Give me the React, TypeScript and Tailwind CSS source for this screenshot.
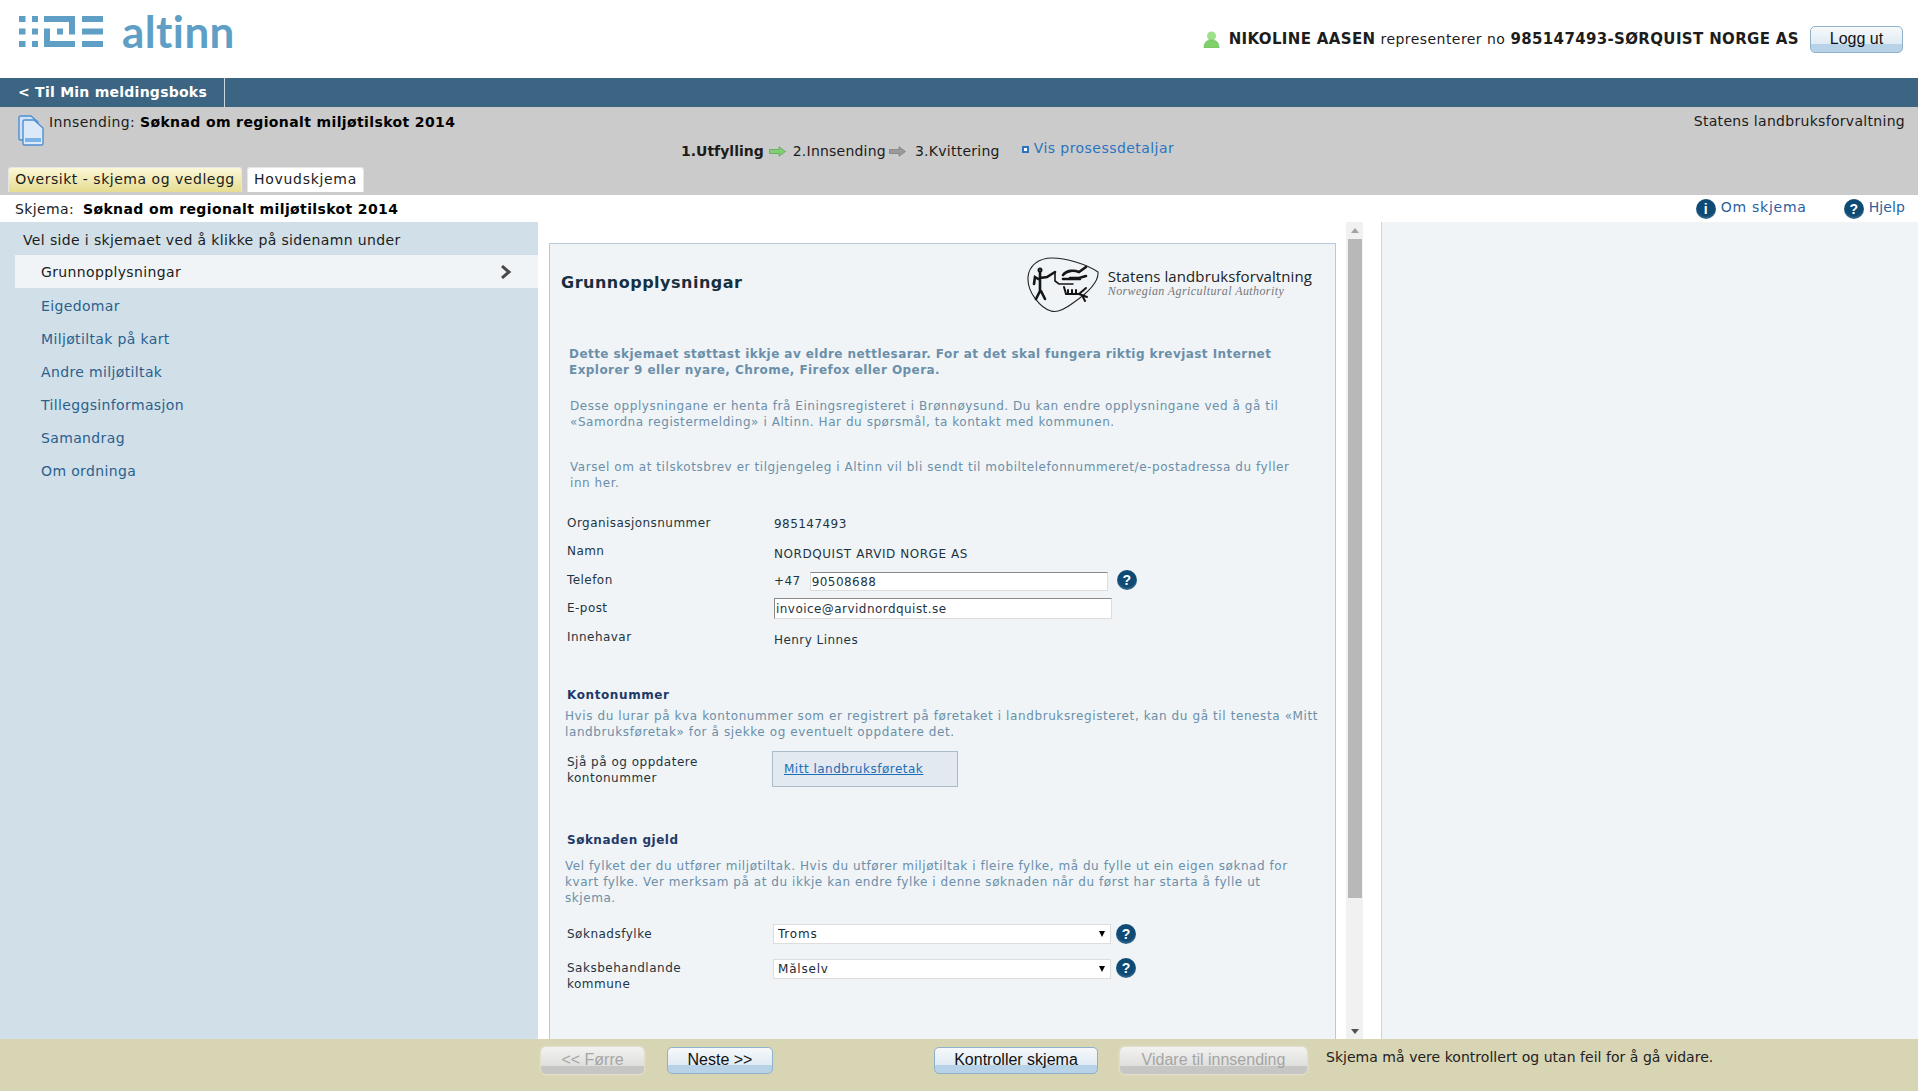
const verdana = "font-['DejaVu_Sans','Verdana',sans-serif]";

const navItems = ['Eigedomar', 'Miljøtiltak på kart', 'Andre miljøtiltak', 'Tilleggsinformasjon', 'Samandrag', 'Om ordninga'];

function AltinnMark() {
  return (
    <svg width="85" height="31" viewBox="0 0 85 31" fill="#5f9fc6">
      {[0, 12.5, 25].map((y) => (
        <g key={y}>
          <rect x="0" y={y} width="6.5" height="6" />
          <rect x="13" y={y} width="6" height="6" />
          <rect x="63" y={y} width="21" height="6" />
        </g>
      ))}
      <path d="M25 0h31v18.5h-6V6H25zM25 12.5h6V25h25v6H25z" />
      <rect x="38" y="12.5" width="6" height="6" />
    </svg>
  );
}

function HelpIcon({ glyph = '?' }: { glyph?: string }) {
  return (
    <span className="flex h-[20px] w-[20px] shrink-0 items-center justify-center rounded-full bg-[radial-gradient(circle_at_50%_40%,#0f4a75_55%,#6d93ad_100%)] font-['Liberation_Sans',sans-serif] text-[14px] font-bold leading-none tracking-normal text-white">
      {glyph}
    </span>
  );
}

function BlueButton({ label, className }: { label: string; className: string }) {
  return (
    <button className={`h-[27px] rounded-[5px] border border-[#8fb1c9] bg-[linear-gradient(#f6f9fb_0%,#dfeaf3_70%,#b8d3e7_70%,#b8d3e7_100%)] pb-[2px] font-['Liberation_Sans',sans-serif] text-[16px] leading-none text-[#111] ${className}`}>
      {label}
    </button>
  );
}

function DisabledButton({ label, className }: { label: string; className: string }) {
  return (
    <button className={`h-[27px] rounded-[5px] bg-[linear-gradient(#f2f2f0_0%,#dededc_72%,#c6c6c4_72%,#c6c6c4_100%)] pb-[2px] font-['Liberation_Sans',sans-serif] text-[16px] leading-none text-[#a5a5a3] shadow-[0_0_3px_#eeeeee] ${className}`}>
      {label}
    </button>
  );
}

function Arrow({ color, edge }: { color: string; edge: string }) {
  return (
    <svg width="17" height="11" viewBox="0 0 17 11" className="shrink-0">
      <path d="M0.5 3.5H10V0.8L16.5 5.5L10 10.2V7.5H0.5Z" fill={color} stroke={edge} strokeWidth="0.8" />
    </svg>
  );
}

function SelectBox({ value }: { value: string }) {
  return (
    <div className="relative h-[20px] w-[338px]">
      <select defaultValue={value} className="h-[20px] w-[338px] appearance-none border border-[#dddddd] bg-white pl-[4px] text-[12px] leading-none tracking-[0.8px] text-[#1a2a36]">
        <option>{value}</option>
      </select>
      <span className="absolute right-[6px] top-[7px] h-0 w-0 border-x-[3px] border-t-[6px] border-x-transparent border-t-black" />
    </div>
  );
}

function LogoAnimal() {
  return (
    <svg width="73" height="56" viewBox="0 0 73 56" fill="none">
      <path d="M1 20C2 9 11 1 25 1C39 1 59 7 71 15C72 25 59 37 46 46C38 52 30 56 24 54C14 51 0 36 1 20Z" stroke="#222" strokeWidth="1.1" />
      <g stroke="#151515" strokeLinecap="round">
        <path d="M13 15L13 35M13 23L8 20L7 27M13 21L20 20L28 15M13 34L9 42M14 34L18 42" strokeWidth="2.6" />
        <circle cx="13" cy="13" r="1.5" strokeWidth="2" />
        <path d="M28 15V24L32 27H46" strokeWidth="1.6" />
        <path d="M36 18C40 13 47 13 52 15L59 10M43 21H52L59 19M36 22H53" strokeWidth="2.6" />
        <path d="M37 30L39 37H52L59 31M41 37V33M45 37V33M49 37V33M52 37L60 40M55 38L58 44" strokeWidth="2" />
      </g>
    </svg>
  );
}

export default function App() {
  return (
    <div className={`flex h-[1091px] w-[1918px] flex-col overflow-hidden bg-white ${verdana} text-[14px] text-[#1c1c1c]`}>
      {/* header */}
      <header className="flex h-[78px] shrink-0 items-start justify-between pl-[19px] pr-[15px]">
        <div className="flex items-start gap-[18px] pt-[16px]">
          <AltinnMark />
          <span className="-mt-[15px] font-['Lato',sans-serif] text-[44px] font-bold leading-[60px] tracking-[0.4px] text-[#5f9fc6]">altinn</span>
        </div>
        <div className="flex items-center gap-[11px] pt-[26px]">
          <svg width="17" height="17" viewBox="0 0 17 17">
            <circle cx="8.5" cy="5" r="4.5" fill="#9fe08c" />
            <path d="M1 17C1 11 4 9 8.5 9C13 9 16 11 16 17Z" fill="#7fd06a" stroke="#69b857" strokeWidth="0.6" />
          </svg>
          <div className="-ml-[2px] text-[15px] tracking-[0.35px]">
            <b>NIKOLINE AASEN</b> <span className="text-[14px] tracking-[0.45px]">representerer no</span> <b>985147493-SØRQUIST NORGE AS</b>
          </div>
          <BlueButton label="Logg ut" className="w-[93px]" />
        </div>
      </header>

      {/* blue bar */}
      <div className="flex h-[29px] shrink-0 bg-[#3b6583]">
        <a className="w-[225px] border-r border-[#c9d6df] pl-[18px] font-bold leading-[29px] tracking-[0.25px] text-white">&lt; Til Min meldingsboks</a>
      </div>

      {/* process area */}
      <div className="flex h-[88px] shrink-0 flex-col bg-[#cbcbcb]">
        <div className="flex h-[60px] justify-between pl-[18px] pr-[13px]">
          <div className="flex items-start gap-[5px] pt-[8px]">
            <svg width="26" height="31" viewBox="0 0 26 31">
              <path d="M1 2.5Q1 1 2.5 1H13L20 7V25H2.5Q1 25 1 23.5Z" fill="#cfe2f7" stroke="#4f8fd0" strokeWidth="1.4" />
              <path d="M5 6.5Q5 5 6.5 5H16L25 13V28.5Q25 30 23.5 30H6.5Q5 30 5 28.5Z" fill="#dbe9f8" stroke="#4f8fd0" strokeWidth="1.4" />
              <rect x="7" y="23" width="16" height="4" fill="#7db4e8" />
            </svg>
            <div className="leading-[15px] tracking-[0.38px]">
              Innsending: <b className="text-black">Søknad om regionalt miljøtilskot 2014</b>
            </div>
          </div>
          <div className="pt-[6px] leading-[16px] tracking-[0.3px]">Statens landbruksforvaltning</div>
        </div>
        <div className="h-0">
          <div className="relative -top-[25px] flex items-center pl-[681px] leading-[18px]">
            <b>1.Utfylling</b>
            <span className="ml-[5px]"><Arrow color="#7fce72" edge="#5fa853" /></span>
            <span className="ml-[7px] tracking-[0.22px]">2.Innsending</span>
            <span className="ml-[3px]"><Arrow color="#9a9a9a" edge="#808080" /></span>
            <span className="ml-[9px] tracking-[0.25px]">3.Kvittering</span>
            <span className="relative -top-[2px] ml-[22px] h-[7px] w-[7px] border-2 border-[#2c74c0] bg-white" />
            <a className="relative -top-[3px] ml-[5px] tracking-[0.45px] text-[#2c74c0]">Vis prosessdetaljar</a>
          </div>
        </div>
        <div className="flex gap-[5px] pl-[8px]">
          <div className="flex h-[25px] w-[234px] items-center justify-center rounded-t-[3px] border border-b-0 border-[#e6e6e6] bg-[linear-gradient(#fbf8d8,#e6dc90)] pb-[1px] tracking-[0.52px]">Oversikt - skjema og vedlegg</div>
          <div className="flex h-[25px] w-[117px] items-center justify-center rounded-t-[3px] border border-b-0 border-[#e6e6e6] bg-white pb-[1px] tracking-[0.7px]">Hovudskjema</div>
        </div>
      </div>

      {/* form title */}
      <div className="flex h-[27px] shrink-0 items-center justify-between pl-[15px] pr-[13px]">
        <div className="pt-[2px] tracking-[0.38px]">
          <span className="mr-[4px]">Skjema:</span> <b className="text-black">Søknad om regionalt miljøtilskot 2014</b>
        </div>
        <div className="flex items-center tracking-[0.75px] text-[#2b5f9e]">
          <HelpIcon glyph="i" />
          <span className="-mt-[2px] ml-[5px]">Om skjema</span>
          <span className="ml-[37px]"><HelpIcon /></span>
          <span className="-mt-[2px] ml-[5px] tracking-[0.1px]">Hjelp</span>
        </div>
      </div>

      {/* main */}
      <div className="flex min-h-0 flex-1 overflow-hidden">
        <nav className="w-[538px] shrink-0 bg-[#d1dfe8] pl-[15px] tracking-[0.36px]">
          <div className="h-[33px] pl-[8px] pt-[9px] leading-[18px]">Vel side i skjemaet ved å klikke på sidenamn under</div>
          <div className="flex h-[33px] items-center justify-between bg-[#f0f4f7] pl-[26px] pr-[26px]">
            <span className="pt-[2px]">Grunnopplysningar</span>
            <svg width="12" height="14" viewBox="0 0 12 14"><path d="M2 1L9 7L2 13" fill="none" stroke="#4a4a4a" strokeWidth="3" /></svg>
          </div>
          {navItems.map((item) => (
            <div key={item} className="flex h-[33px] items-center pl-[26px] pt-[3px] text-[#2b5f8e]">{item}</div>
          ))}
        </nav>

        <div className="flex w-[843px] shrink-0 pl-[11px]">
          <section className="mt-[21px] h-[900px] w-[787px] shrink-0 border border-[#b8cad9] bg-[#f0f4f7] text-[12px] leading-[16px] tracking-[0.5px] text-[#1f3442]">
            <div className="flex h-[69px] items-start justify-between pl-[11px] pr-[23px] pt-[13px]">
              <h1 className="pt-[16px] text-[16px] font-bold leading-[20px] text-[#17303f]">Grunnopplysningar</h1>
              <div className="flex items-start">
                <LogoAnimal />
                <div className="ml-[8px] pt-[10px] tracking-normal">
                  <div className="font-['Open_Sans',sans-serif] text-[15px] leading-[18px] tracking-[0.1px] text-[#222]">Statens landbruksforvaltning</div>
                  <div className="font-['Liberation_Serif',serif] text-[12px] italic leading-[13px] tracking-[0.4px] text-[#777]">Norwegian Agricultural Authority</div>
                </div>
              </div>
            </div>

            <p className="ml-[19px] mt-[33px] font-bold tracking-[0.44px] text-[#6b8fa9]">
              Dette skjemaet støttast ikkje av eldre nettlesarar. For at det skal fungera riktig krevjast Internet<br />
              Explorer 9 eller nyare, Chrome, Firefox eller Opera.
            </p>
            <p className="ml-[20px] mt-[20px] tracking-[0.56px] text-[#6b8fa9]">
              Desse opplysningane er henta frå Einingsregisteret i Brønnøysund. Du kan endre opplysningane ved å gå til<br />
              «Samordna registermelding» i Altinn. Har du spørsmål, ta kontakt med kommunen.
            </p>
            <p className="ml-[20px] mt-[29px] tracking-[0.56px] text-[#6b8fa9]">
              Varsel om at tilskotsbrev er tilgjengeleg i Altinn vil bli sendt til mobiltelefonnummeret/e-postadressa du fyller<br />
              inn her.
            </p>

            <div className="ml-[17px] mt-[24px] grid grid-cols-[207px_1fr] auto-rows-[28.5px] tracking-[0.45px]">
              <div>Organisasjonsnummer</div>
              <div className="pt-[1px]">985147493</div>
              <div className="-mt-[1px]">Namn</div>
              <div className="pt-[2px] tracking-[0.56px]">NORDQUIST ARVID NORGE AS</div>
              <div>Telefon</div>
              <div className="flex items-start gap-[9px]">
                <span className="pt-[1px]">+47</span>
                <input readOnly defaultValue="90508688" className="h-[19px] w-[298px] border border-[#dddddd] border-t-[#8a8a8a] bg-white pl-[1px] text-[12px] outline-none" />
                <span className="-mt-[2px]"><HelpIcon /></span>
              </div>
              <div className="-mt-[1px]">E-post</div>
              <div>
                <input readOnly defaultValue="invoice@arvidnordquist.se" className="-mt-[9px] h-[21px] w-[338px] border border-[#dddddd] border-l-[#8a8a8a] border-t-[#8a8a8a] bg-white pl-[1px] text-[12px] outline-none" />
              </div>
              <div>Innehavar</div>
              <div className="pt-[3px]">Henry Linnes</div>
            </div>

            <h2 className="ml-[17px] mt-[29px] font-bold tracking-[0.6px] text-[#1f3a68]">Kontonummer</h2>
            <p className="ml-[15px] mt-[5px] tracking-[0.6px] text-[#6b8fa9]">
              Hvis du lurar på kva kontonummer som er registrert på føretaket i landbruksregisteret, kan du gå til tenesta «Mitt<br />
              landbruksføretak» for å sjekke og eventuelt oppdatere det.
            </p>
            <div className="ml-[17px] mt-[11px] grid grid-cols-[205px_1fr]">
              <div className="pt-[3px]">Sjå på og oppdatere<br />kontonummer</div>
              <div className="flex h-[36px] w-[186px] items-center border border-[#a9bccb] bg-[#e2e9f0] pl-[11px]">
                <a className="text-[#1d6fb8] underline">Mitt landbruksføretak</a>
              </div>
            </div>

            <h2 className="ml-[17px] mt-[45px] font-bold tracking-[0.5px] text-[#1f3a68]">Søknaden gjeld</h2>
            <p className="ml-[15px] mt-[10px] tracking-[0.56px] text-[#6b8fa9]">
              Vel fylket der du utfører miljøtiltak. Hvis du utfører miljøtiltak i fleire fylke, må du fylle ut ein eigen søknad for<br />
              kvart fylke. Ver merksam på at du ikkje kan endre fylke i denne søknaden når du først har starta å fylle ut<br />
              skjema.
            </p>

            <div className="ml-[17px] mt-[18px] grid grid-cols-[206px_1fr] auto-rows-[35px]">
              <div className="pt-[2px]">Søknadsfylke</div>
              <div className="flex items-start gap-[5px]">
                <SelectBox value="Troms" />
                <HelpIcon />
              </div>
              <div className="pt-[1px]">Saksbehandlande<br />kommune</div>
              <div className="flex items-start gap-[5px]">
                <SelectBox value="Målselv" />
                <span className="-mt-[1px]"><HelpIcon /></span>
              </div>
            </div>
          </section>

          {/* scrollbar */}
          <div className="ml-[10px] flex w-[17px] shrink-0 flex-col items-center bg-[#f1f1f1]">
            <span className="mt-[6px] h-0 w-0 border-x-[4px] border-b-[5px] border-x-transparent border-b-[#a3a3a3]" />
            <div className="mt-[6px] h-[659px] w-[14px] bg-[#b8b8b8]" />
            <div className="flex-1" />
            <span className="mb-[5px] h-0 w-0 border-x-[4px] border-t-[5px] border-x-transparent border-t-[#505050]" />
          </div>
        </div>

        <aside className="flex-1 border-l border-[#c6d6e2] bg-[#f0f4f7]" />
      </div>

      {/* footer */}
      <footer className="flex h-[52px] shrink-0 items-start bg-[#d8d5b5] pl-[541px] pt-[8px]">
        <DisabledButton label="<< Førre" className="w-[103px]" />
        <BlueButton label="Neste >>" className="ml-[23px] w-[106px]" />
        <BlueButton label="Kontroller skjema" className="ml-[161px] w-[164px]" />
        <DisabledButton label="Vidare til innsending" className="ml-[22px] w-[187px]" />
        <span className="ml-[19px] mt-[1px] text-[14px] leading-[18px] tracking-[0.03px] text-[#222]">Skjema må vere kontrollert og utan feil for å gå vidare.</span>
      </footer>
    </div>
  );
}
